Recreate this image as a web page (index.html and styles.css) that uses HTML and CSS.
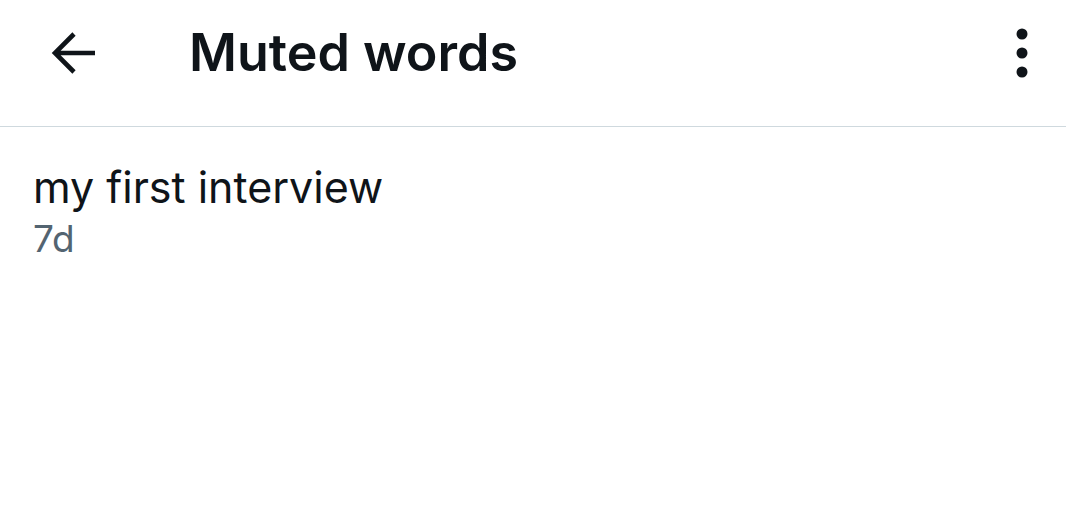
FILE: index.html
```html
<!DOCTYPE html>
<html>
<head>
<meta charset="utf-8">
<link rel="stylesheet" href="styles.css">
</head>
<body>
<header class="topbar">
  <button class="icon-btn back" aria-label="Back">
    <svg width="46" height="44" viewBox="0 0 46 44"><path d="M45 22H5M24 3L5 22l19 19" fill="none" stroke="#0f1419" stroke-width="4.6" stroke-linecap="butt" stroke-linejoin="miter"/></svg>
  </button>
  <h1 class="title">Muted words</h1>
  <button class="icon-btn more" aria-label="More">
    <svg width="14" height="52" viewBox="0 0 14 52"><circle cx="7" cy="7" r="5.5" fill="#0f1419"/><circle cx="7" cy="26" r="5.5" fill="#0f1419"/><circle cx="7" cy="45" r="5.5" fill="#0f1419"/></svg>
  </button>
</header>
<main class="list">
  <div class="item">
    <div class="word">my first interview</div>
    <div class="meta">7d</div>
  </div>
</main>
</body>
</html>
```
FILE: styles.css
```css
* { box-sizing: border-box; }
html, body { margin: 0; background: #fff; }
body { font-family: Inter, Roboto, "Noto Sans", sans-serif; color: #0f1419; }
.topbar {
  height: 127px;
  display: flex;
  align-items: center;
  border-bottom: 1px solid #cfd9de;
  padding: 0 30px 20px 50px;
}
.icon-btn { background: none; border: 0; padding: 0; display: flex; align-items: center; cursor: pointer; }
.title {
  margin: 0 0 0 93px;
  font-size: 52px;
  font-weight: 600;
  letter-spacing: 0;
  flex: 1;
  line-height: 1;
}
.more { margin-right: 7px; }
.item { padding: 34px 33px; }
.word { font-size: 43px; line-height: 52px; }
.meta { font-size: 37px; line-height: 52px; color: #536471; }
```
